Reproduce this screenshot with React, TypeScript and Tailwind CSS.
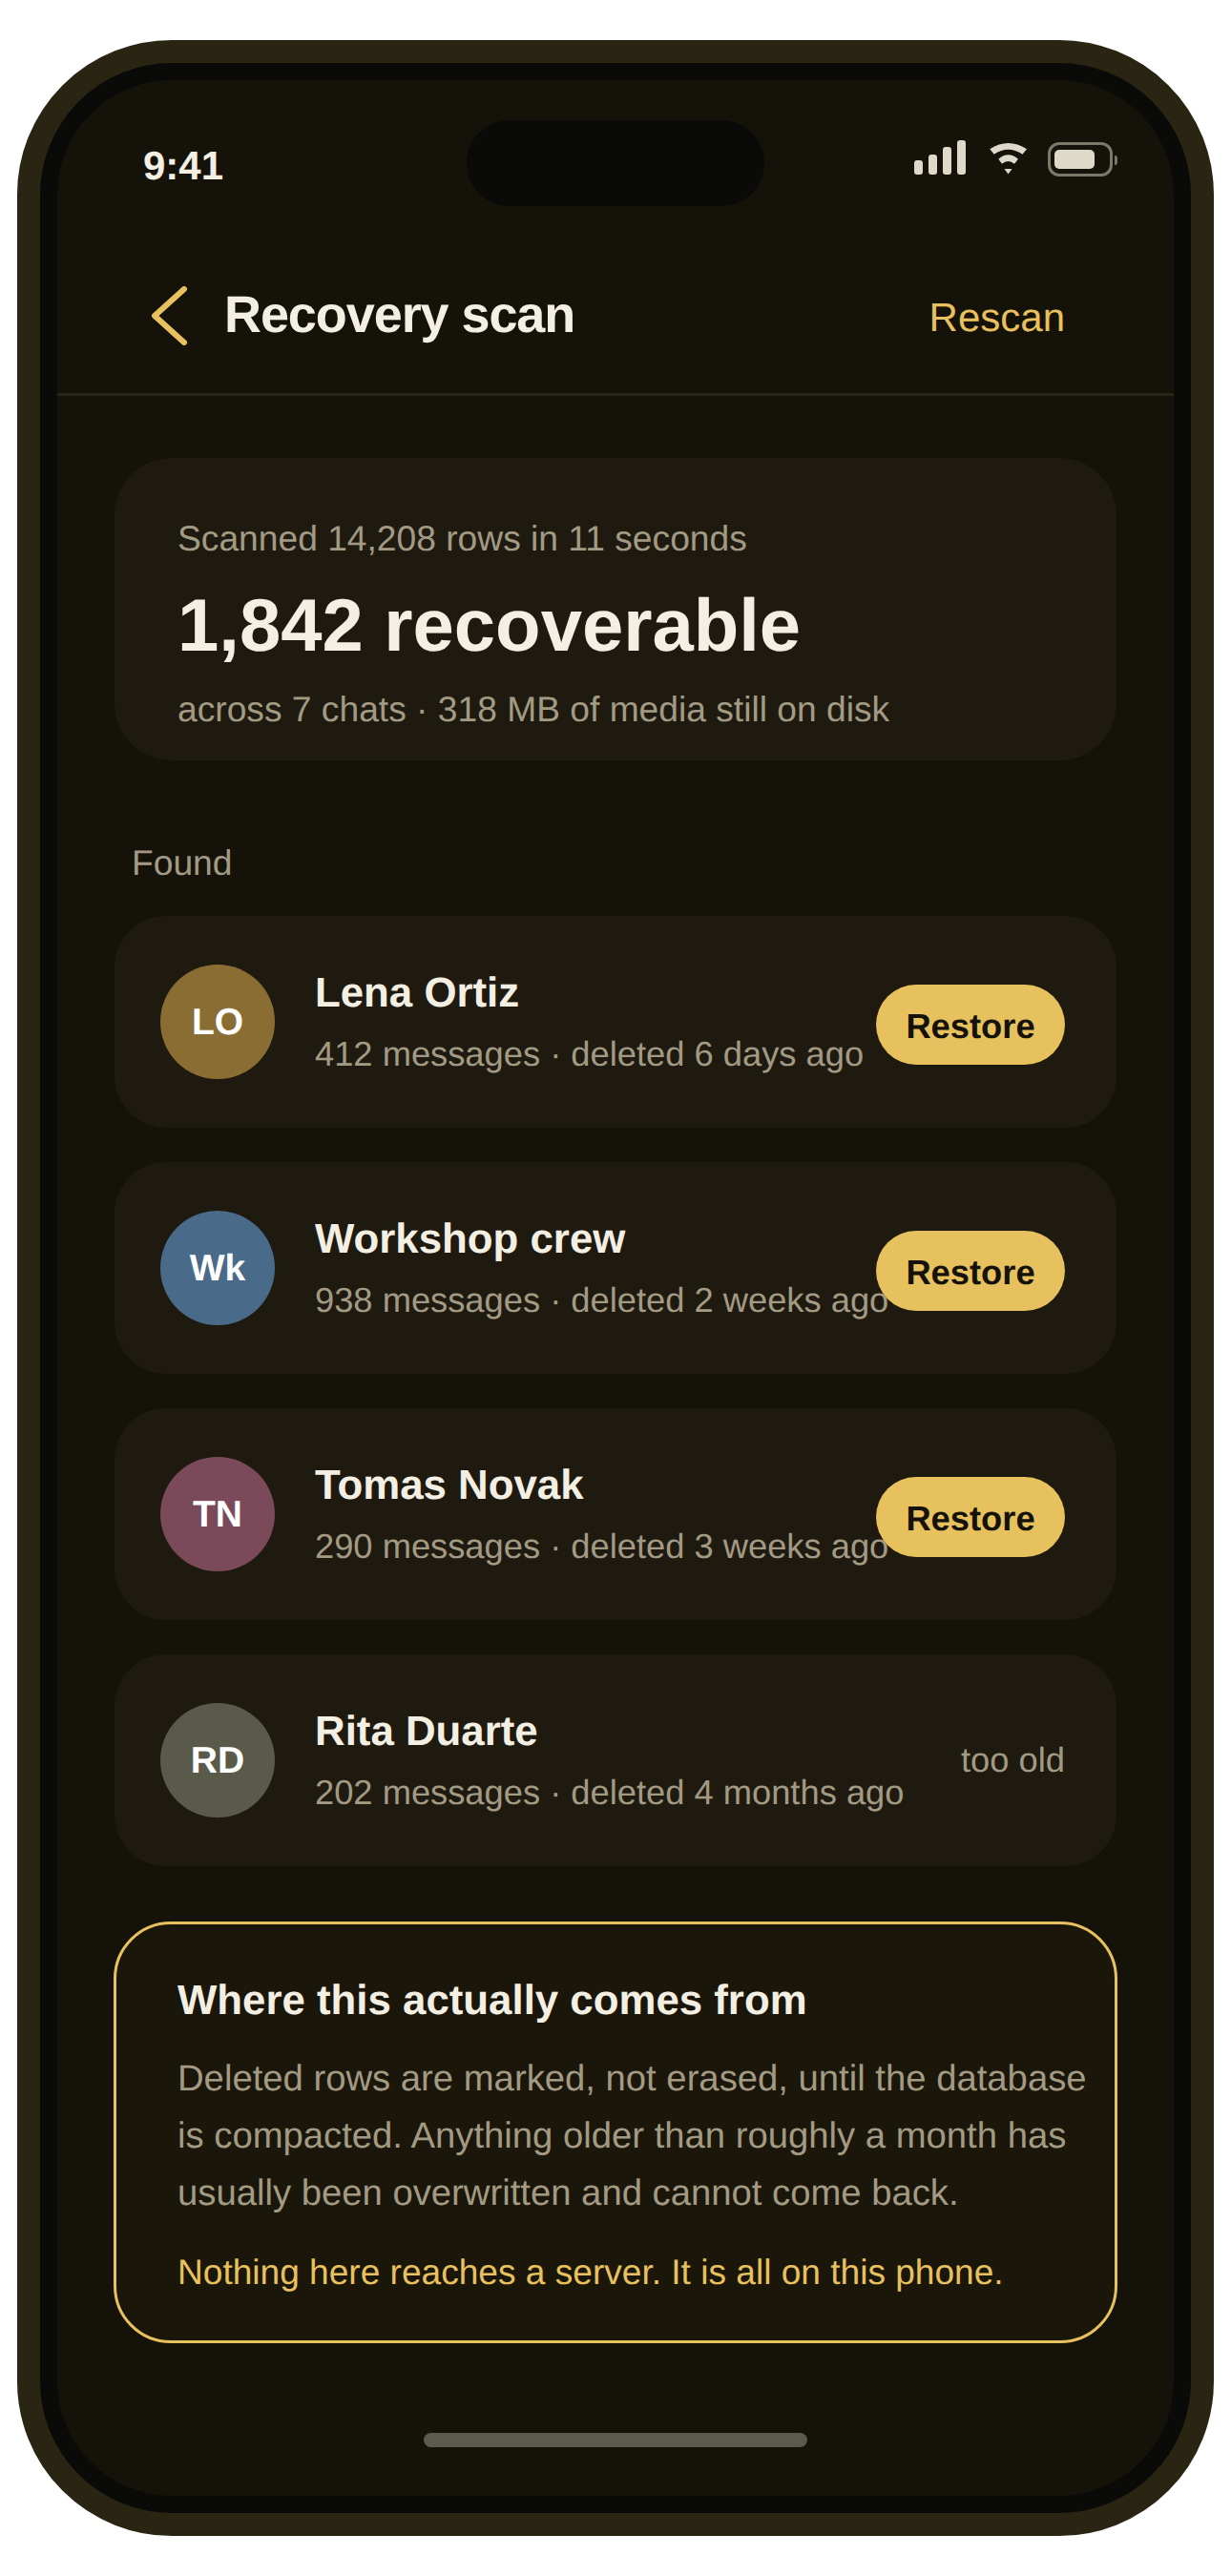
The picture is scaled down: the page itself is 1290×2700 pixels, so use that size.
const rows = [
  { initials: "LO", name: "Lena Ortiz", sub: "412 messages · deleted 6 days ago", color: "bg-[#8a6d33]", restore: true },
  { initials: "Wk", name: "Workshop crew", sub: "938 messages · deleted 2 weeks ago", color: "bg-[#4a6a8a]", restore: true },
  { initials: "TN", name: "Tomas Novak", sub: "290 messages · deleted 3 weeks ago", color: "bg-[#7a4a5a]", restore: true },
  { initials: "RD", name: "Rita Duarte", sub: "202 messages · deleted 4 months ago", color: "bg-[#5a5a4a]", restore: false },
];

const StatusIcons = () => (
  <div className="flex items-end">
    <div className="flex items-end gap-[6px]">
      <div className="h-[15px] w-[9px] rounded-[3px] bg-[#ded9c8]" />
      <div className="h-[21px] w-[9px] rounded-[3px] bg-[#ded9c8]" />
      <div className="h-[29px] w-[9px] rounded-[3px] bg-[#ded9c8]" />
      <div className="h-[36px] w-[9px] rounded-[3px] bg-[#ded9c8]" />
    </div>
    <svg className="ml-[25px]" width="40" height="34" viewBox="0 0 40 34" fill="#ded9c8">
      <path d="M0.3 7.3 Q19.5 -5.5 39 7.3 L34.5 12.7 Q19.5 3 4.7 12.7 Z" />
      <path d="M9.3 17.7 Q19.5 9 30 17.7 L26 22.7 Q19.5 17.5 13 22.7 Z" />
      <path d="M15.5 28 L23.5 28 L19.5 33.5 Z" />
    </svg>
    <div className="relative ml-[21px] mb-[-2px] flex h-[36px] w-[68px] items-center rounded-[12px] border-[3px] border-[#7c7869] pl-[4px]">
      <div className="h-[20px] w-[42px] rounded-[5px] bg-[#ded9c8]" />
      <div className="absolute right-[-8px] top-[11px] h-[10px] w-[3px] rounded-r-[3px] bg-[#7c7869]" />
    </div>
  </div>
);

const Row = ({ initials, name, sub, color, restore }: (typeof rows)[number]) => (
  <div className="flex h-[222px] items-center rounded-[54px] bg-[#1f1a10] pl-[48px] pr-[54px]">
    <div className={`flex h-[120px] w-[120px] shrink-0 items-center justify-center rounded-full pt-[2px] text-[39px] font-bold text-white ${color}`}>
      {initials}
    </div>
    <div className="ml-[42px] min-w-0 flex-1 whitespace-nowrap">
      <div className="text-[43.8px] font-bold leading-[54px] text-[#f4efe3]">{name}</div>
      <div className="mt-[13px] text-[36.3px] leading-[48px] text-[#a39a84]">{sub}</div>
    </div>
    {restore ? (
      <div className="relative mt-[6px] flex h-[84px] w-[198px] shrink-0 items-center justify-center rounded-full bg-[#e8c15f] pt-[5px] text-[36.3px] font-bold text-[#15120a]">
        Restore
      </div>
    ) : (
      <div className="shrink-0 text-[36.3px] text-[#a39a84]">too old</div>
    )}
  </div>
);

export default function App() {
  return (
    <div className="min-h-[2700px] bg-white pl-[18px] pt-[42px] font-['Liberation_Sans',sans-serif] [text-rendering:geometricPrecision]">
      <div className="h-[2616px] w-[1254px] rounded-[162px] border-[24px] border-[#2a2412] bg-[#0a0a08] p-[18px]">
        <div className="relative flex h-full flex-col rounded-[120px] bg-[#15120a]">
          <div className="absolute left-[429px] top-[42px] h-[90px] w-[312px] rounded-[45px] bg-[#0a0a08]" />

          <div className="flex h-[168px] items-start justify-between pl-[90px] pr-[64px] pt-[63px]">
            <span className="text-[42px] font-bold leading-[54px] text-[#f4efe3]">9:41</span>
            <StatusIcons />
          </div>

          <div className="flex h-[163px] items-center justify-between border-b-[3px] border-[#2a2517] pb-[3px] pl-[99px] pr-[114px]">
            <div className="flex items-center">
              <svg width="38" height="62" viewBox="0 0 38 62" fill="none" stroke="#e8c15f" strokeWidth="6" strokeLinecap="round" strokeLinejoin="round">
                <path d="M34 3 L3 31 L34 59" />
              </svg>
              <span className="ml-[38px] text-[54px] font-bold tracking-[-0.02em] text-[#f4efe3]">Recovery scan</span>
            </div>
            <span className="mt-[4px] text-[42px] text-[#e8c15f]">Rescan</span>
          </div>

          <div className="flex flex-col px-[60px] pt-[65px]">
            <div className="h-[317px] rounded-[60px] bg-[#1f1a10] px-[66px] pt-[60px]">
              <div className="text-[37.2px] leading-[48px] text-[#a39a84]">Scanned 14,208 rows in 11 seconds</div>
              <div className="mt-[23px] text-[77.8px] font-bold leading-[90px] text-[#f4efe3]">1,842 recoverable</div>
              <div className="mt-[18px] text-[37.2px] leading-[48px] text-[#a39a84]">across 7 chats · 318 MB of media still on disk</div>
            </div>

            <div className="mb-[32px] ml-[18px] mt-[83px] text-[37.2px] leading-[48px] text-[#a39a84]">Found</div>

            <div className="flex flex-col gap-[36px]">
              {rows.map((r) => (
                <Row key={r.name} {...r} />
              ))}
            </div>

            <div className="mx-[-1px] mt-[58px] h-[442px] rounded-[60px] border-[3px] border-[#e8c15f] bg-[#1a1609] pl-[64px] pr-[24px] pt-[53px]">
              <div className="text-[43.8px] font-bold leading-[54px] text-[#f4efe3]">Where this actually comes from</div>
              <p className="mt-[25px] text-[38.25px] leading-[60px] text-[#a39a84]">
                Deleted rows are marked, not erased, until the database is compacted. Anything older than roughly a month has usually been overwritten and cannot come back.
              </p>
              <p className="mt-[22px] text-[37.1px] leading-[60px] text-[#e8c15f]">Nothing here reaches a server. It is all on this phone.</p>
            </div>
          </div>

          <div className="absolute bottom-[51px] left-[384px] h-[15px] w-[402px] rounded-full bg-[#5c594d]" />
        </div>
      </div>
    </div>
  );
}
